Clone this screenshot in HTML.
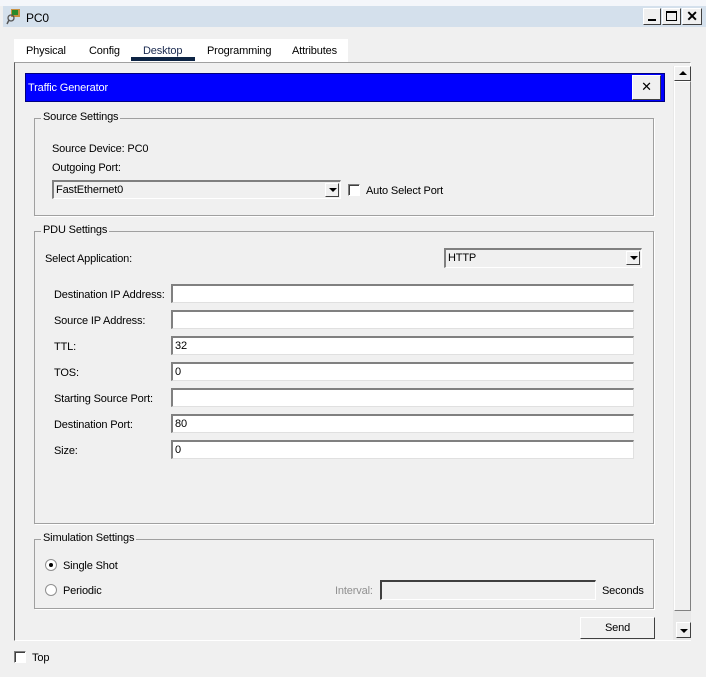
<!DOCTYPE html>
<html><head><style>
*{margin:0;padding:0;box-sizing:border-box}
body{width:706px;height:677px;background:#f0f0f0;font-family:"Liberation Sans",sans-serif;font-size:11px;letter-spacing:-0.15px;color:#000;position:relative;overflow:hidden}
.a{position:absolute;white-space:nowrap}
.gb{position:absolute;border:1px solid #a0a0a0;box-shadow:1px 1px 0 #fff}
.gb>span{position:absolute;top:-8px;left:6px;background:#f0f0f0;padding:0 2px;font-size:11px}
.fld{position:absolute;left:171px;width:463px;height:19px;background:#fff;border-top:2px solid #808080;border-left:2px solid #808080;border-right:1px solid #e0e0e0;border-bottom:1px solid #e0e0e0;padding-left:2px;line-height:16px}
.lbl{position:absolute;left:54px}
.cb{position:absolute;background:#f0f0f0;border-top:2px solid #808080;border-left:2px solid #808080;border-right:1px solid #fff;border-bottom:1px solid #fff;padding-left:2px;line-height:16px}
.dd{position:absolute;right:1px;top:1px;width:14px;height:14px;background:#f0f0f0;border:1px solid;border-color:#fff #404040 #404040 #fff}
.dd:after{content:"";position:absolute;left:3px;top:4px;border-left:4px solid transparent;border-right:4px solid transparent;border-top:4px solid #000}
.btn{position:absolute;background:#f0f0f0;border:1px solid;border-color:#fff #404040 #404040 #fff;text-align:center}
.chk{position:absolute;width:12px;height:12px;background:#fff;border-top:1px solid #808080;border-left:1px solid #808080;border-right:1px solid #fff;border-bottom:1px solid #fff;box-shadow:inset 1px 1px 0 #404040}
.rad{position:absolute;width:12px;height:12px;border-radius:50%;background:#fff;border:1px solid #909090}
</style></head><body>
<div class="a" style="left:0;top:0;width:706px;height:6px;background:#f4f6fa"></div>
<div class="a" style="left:3px;top:6px;width:703px;height:21px;background:#d4e0ec"></div>
<svg class="a" style="left:6px;top:8px" width="16" height="17"><rect x="5" y="1" width="9" height="8" fill="#c89040"/><rect x="6" y="2" width="6" height="5" fill="#2a8a2a"/><circle cx="5" cy="10" r="3" fill="none" stroke="#555" stroke-width="1.3"/><line x1="3" y1="12" x2="1" y2="16" stroke="#555" stroke-width="1.5"/></svg>
<div class="a" style="left:26px;top:11px;font-size:12px">PC0</div>
<div class="btn" style="left:643px;top:8px;width:18px;height:17px"><div class="a" style="left:4px;top:10px;width:8px;height:2px;background:#000"></div></div>
<div class="btn" style="left:662px;top:8px;width:19px;height:17px"><div class="a" style="left:3px;top:2px;width:11px;height:10px;border:1px solid #000;border-top-width:2px"></div></div>
<div class="btn" style="left:682px;top:8px;width:20px;height:17px;font-weight:bold;font-size:14px;line-height:14px">✕</div>
<div class="a" style="left:14px;top:39px;width:334px;height:23px;background:#fff"></div>
<div class="a" style="left:26px;top:45px">Physical</div>
<div class="a" style="left:89px;top:45px">Config</div>
<div class="a" style="left:143px;top:45px;color:#1a2a50">Desktop</div>
<div class="a" style="left:207px;top:45px">Programming</div>
<div class="a" style="left:292px;top:45px">Attributes</div>
<div class="a" style="left:131px;top:57px;width:64px;height:4px;background:#0d2444"></div>
<div class="a" style="left:14px;top:62px;width:677px;height:579px;border-top:1px solid #a0a0a0;border-left:1px solid #606060;border-right:1px solid #fff;border-bottom:1px solid #fff"></div>
<div class="a" style="left:25px;top:73px;width:640px;height:29px;background:#0000ff;border:1px solid #000080"></div>
<div class="a" style="left:28px;top:82px;color:#fff">Traffic Generator</div>
<div class="btn" style="left:632px;top:75px;width:29px;height:25px;font-size:13px;line-height:22px">✕</div>
<div class="gb" style="left:34px;top:118px;width:620px;height:98px"><span>Source Settings</span></div>
<div class="a" style="left:52px;top:143px">Source Device: PC0</div>
<div class="a" style="left:52px;top:162px">Outgoing Port:</div>
<div class="cb" style="left:52px;top:180px;width:289px;height:19px">FastEthernet0<div class="dd"></div></div>
<div class="chk" style="left:348px;top:184px"></div>
<div class="a" style="left:366px;top:185px">Auto Select Port</div>
<div class="gb" style="left:34px;top:231px;width:620px;height:293px"><span>PDU Settings</span></div>
<div class="a" style="left:45px;top:253px">Select Application:</div>
<div class="cb" style="left:444px;top:248px;width:198px;height:20px">HTTP<div class="dd"></div></div>
<div class="lbl" style="top:289px">Destination IP Address:</div><div class="fld" style="top:284px"></div>
<div class="lbl" style="top:315px">Source IP Address:</div><div class="fld" style="top:310px"></div>
<div class="lbl" style="top:341px">TTL:</div><div class="fld" style="top:336px">32</div>
<div class="lbl" style="top:367px">TOS:</div><div class="fld" style="top:362px">0</div>
<div class="lbl" style="top:393px">Starting Source Port:</div><div class="fld" style="top:388px"></div>
<div class="lbl" style="top:419px">Destination Port:</div><div class="fld" style="top:414px">80</div>
<div class="lbl" style="top:445px">Size:</div><div class="fld" style="top:440px">0</div>
<div class="gb" style="left:34px;top:539px;width:620px;height:70px"><span>Simulation Settings</span></div>
<div class="rad" style="left:45px;top:559px"><div class="a" style="left:3px;top:3px;width:4px;height:4px;border-radius:50%;background:#000"></div></div>
<div class="a" style="left:63px;top:560px">Single Shot</div>
<div class="rad" style="left:45px;top:584px"></div>
<div class="a" style="left:63px;top:585px">Periodic</div>
<div class="a" style="left:335px;top:585px;color:#909090">Interval:</div>
<div class="cb" style="left:380px;top:580px;width:216px;height:20px;border-top-color:#404040;border-left-color:#404040"></div>
<div class="a" style="left:602px;top:585px">Seconds</div>
<div class="btn" style="left:580px;top:617px;width:75px;height:22px;line-height:20px">Send</div>
<div class="a" style="left:673px;top:66px;width:18px;height:574px;background:#e8e8e8"></div>
<div class="btn" style="left:674px;top:66px;width:17px;height:15px"><div class="a" style="left:4px;top:4px;border-left:4px solid transparent;border-right:4px solid transparent;border-bottom:4px solid #000"></div></div>
<div class="btn" style="left:674px;top:81px;width:17px;height:530px;border-right-color:#808080;border-bottom-color:#808080"></div>
<div class="btn" style="left:676px;top:622px;width:15px;height:16px"><div class="a" style="left:3px;top:6px;border-left:4px solid transparent;border-right:4px solid transparent;border-top:4px solid #000"></div></div>
<div class="chk" style="left:14px;top:651px"></div>
<div class="a" style="left:32px;top:652px">Top</div>
</body></html>
